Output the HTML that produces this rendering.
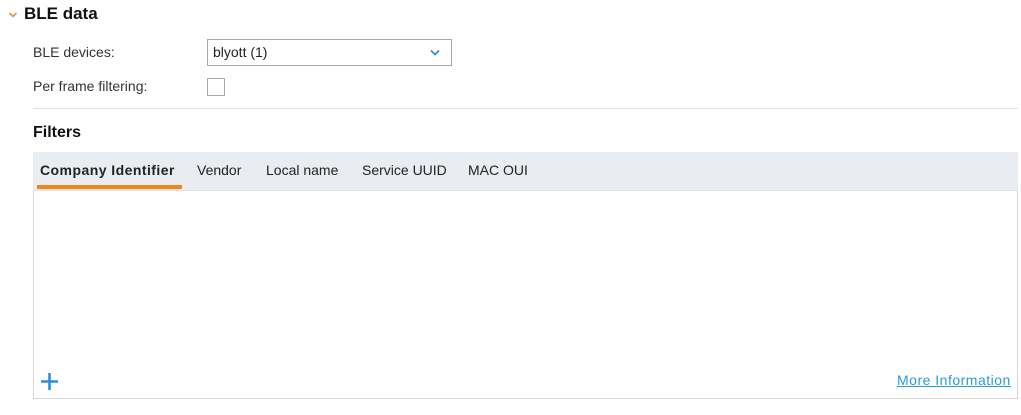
<!DOCTYPE html>
<html><head><style>
*{margin:0;padding:0;box-sizing:border-box}
body{width:1021px;height:415px;background:#fff;font-family:"Liberation Sans",sans-serif;color:#222;position:relative;overflow:hidden}
.abs{position:absolute;white-space:nowrap}
</style></head><body>
<svg class="abs" style="left:8px;top:11px" width="10" height="8" viewBox="0 0 10 8"><path d="M1.5 2 L5 5.5 L8.5 2" stroke="#e8862a" stroke-width="1.5" fill="none"/></svg>
<div class="abs" style="left:24px;top:4px;font-size:17px;font-weight:bold;color:#111">BLE data</div>
<div class="abs" style="left:33px;top:44px;font-size:14px;color:#333">BLE devices:</div>
<div class="abs" style="left:207px;top:39px;width:245px;height:27px;border:1px solid #a8a8a8;background:#fff"></div>
<div class="abs" style="left:213px;top:44px;font-size:14px;color:#222">blyott (1)</div>
<svg class="abs" style="left:429px;top:48px" width="12" height="9" viewBox="0 0 12 9"><path d="M2 2.5 L6 6.5 L10 2.5" stroke="#2b8fd6" stroke-width="1.8" fill="none"/></svg>
<div class="abs" style="left:33px;top:78px;font-size:14px;color:#333">Per frame filtering:</div>
<div class="abs" style="left:207px;top:78px;width:18px;height:18px;border:1px solid #a8a8a8;background:#fff"></div>
<div class="abs" style="left:33px;top:108px;width:985px;height:1px;background:#e2e2e2"></div>
<div class="abs" style="left:33px;top:124px;font-size:16px;font-weight:bold;color:#111">Filters</div>
<div class="abs" style="left:33px;top:152px;width:985px;height:38px;background:#e9ecf0"></div>
<div class="abs" style="left:40px;top:162px;font-size:14px;font-weight:bold;color:#222;letter-spacing:0.45px">Company Identifier</div>
<div class="abs" style="left:37px;top:185px;width:145px;height:4px;background:#ef8519"></div>
<div class="abs" style="left:197px;top:162px;font-size:14px;color:#222">Vendor</div>
<div class="abs" style="left:266px;top:162px;font-size:14px;color:#222">Local name</div>
<div class="abs" style="left:362px;top:162px;font-size:14px;color:#222">Service UUID</div>
<div class="abs" style="left:468px;top:162px;font-size:14px;color:#222">MAC OUI</div>
<div class="abs" style="left:33px;top:190px;width:985px;height:209px;border:1px solid #d6d6d6;border-top:1px solid #e0e3e6;background:#fff"></div>
<svg class="abs" style="left:40px;top:372px" width="19" height="19" viewBox="0 0 19 19"><path d="M9.5 1 V18 M1 9.5 H18" stroke="#2b8fd6" stroke-width="2.6"/></svg>
<div class="abs" style="left:897px;top:372px;font-size:14px;color:#2b9ad9;text-decoration:underline;letter-spacing:0.5px">More Information</div>
</body></html>
